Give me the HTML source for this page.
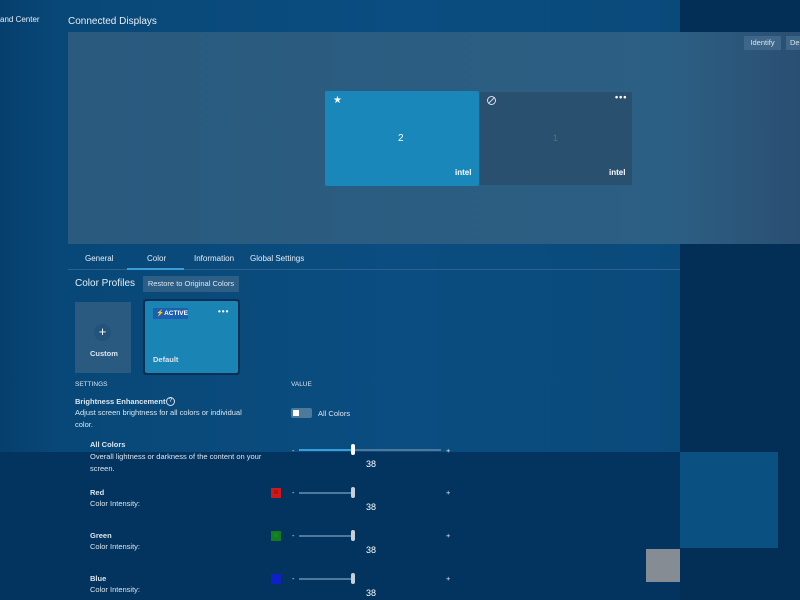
<!DOCTYPE html>
<html><head><style>
*{margin:0;padding:0;box-sizing:border-box}
body{width:800px;height:600px;overflow:hidden;position:relative;font-family:"Liberation Sans",sans-serif;color:#fff;background:#0a4a7c}
.a{position:absolute}
.t{font-size:8px;color:#e6eef5}
.s{font-size:7.5px;color:#dbe6ef}
.b{font-weight:bold}
.track{position:absolute;height:2px;background:#4d7a9c}
.thumb{position:absolute;width:4px;height:11px;background:#c7d0d8;border-radius:2px}
</style></head><body>
<div class="a" style="left:0;top:0;width:800px;height:452px;background:linear-gradient(90deg,#063f6e 0,#084878 60px,#0b4d80 400px,#0a4a7b 680px)"></div>
<div class="a" style="left:0;top:452px;width:800px;height:148px;background:#03345f"></div>
<div class="a" style="left:680px;top:0;width:120px;height:600px;background:#032f57"></div>
<div class="a" style="left:680px;top:452px;width:98px;height:96px;background:#0a5080"></div>
<div class="a" style="left:646px;top:549px;width:34px;height:33px;background:#858c94"></div>
<div class="a t" style="left:0;top:15px;font-size:8px">and Center</div>
<div class="a" style="left:68px;top:16px;font-size:10px;color:#e6eef5">Connected Displays</div>
<div class="a" style="left:68px;top:32px;width:732px;height:212px;background:linear-gradient(90deg,#2a5a7e 0,#2c5f84 600px,#2a4f72 732px)"></div>
<div class="a s" style="left:744px;top:36px;width:37px;height:14px;background:#3e6688;text-align:center;line-height:14px">Identify</div>
<div class="a s" style="left:786px;top:36px;width:20px;height:14px;background:#3e6688;line-height:14px;padding-left:4px">De</div>
<div class="a" style="left:325px;top:91px;width:154px;height:95px;background:#1a87bb;border-radius:2px"></div>
<div class="a" style="left:333px;top:95px;font-size:10px">★</div>
<div class="a" style="left:398px;top:133px;font-size:10px">2</div>
<div class="a b" style="left:455px;top:168px;font-size:8px">intel</div>
<div class="a" style="left:480px;top:92px;width:152px;height:93px;background:#2a5070"></div>
<div class="a" style="left:487px;top:96px;width:9px;height:9px;border:1.3px solid #dde;border-radius:50%"><div class="a" style="left:3px;top:-1px;width:1.3px;height:9px;background:#dde;transform:rotate(45deg)"></div></div>
<div class="a b" style="left:615px;top:92px;font-size:9px;letter-spacing:1px">•••</div>
<div class="a" style="left:553px;top:133px;font-size:9px;color:#4a7a6a">1</div>
<div class="a b" style="left:609px;top:168px;font-size:8px">intel</div>
<div class="a t" style="left:85px;top:254px">General</div>
<div class="a t" style="left:147px;top:254px">Color</div>
<div class="a t" style="left:194px;top:254px">Information</div>
<div class="a t" style="left:250px;top:254px">Global Settings</div>
<div class="a" style="left:68px;top:269px;width:612px;height:1px;background:#2c6090"></div>
<div class="a" style="left:127px;top:268px;width:57px;height:2px;background:#3a9ed8"></div>
<div class="a" style="left:75px;top:278px;font-size:10px;color:#e6eef5">Color Profiles</div>
<div class="a s" style="left:143px;top:276px;width:96px;height:16px;background:#2d5e86;text-align:center;line-height:16px">Restore to Original Colors</div>
<div class="a" style="left:75px;top:302px;width:56px;height:71px;background:#2a5a80"></div>
<div class="a" style="left:94px;top:324px;width:17px;height:17px;border-radius:50%;background:#23527a;text-align:center;font-size:13px;line-height:16px">+</div>
<div class="a b s" style="left:90px;top:349px">Custom</div>
<div class="a" style="left:143px;top:299px;width:97px;height:76px;background:#0b2f52;border-radius:3px"></div>
<div class="a" style="left:145px;top:301px;width:93px;height:72px;background:#1a84b4;border-radius:2px"></div>
<div class="a b" style="left:153px;top:308px;width:35px;height:11px;background:#1c5fb0;font-size:6.5px;line-height:11px;padding-left:3px">⚡ACTIVE</div>
<div class="a b" style="left:218px;top:307px;font-size:8px;letter-spacing:1px">•••</div>
<div class="a b s" style="left:153px;top:355px">Default</div>
<div class="a" style="left:75px;top:381px;font-size:6.5px;color:#dbe6ef">SETTINGS</div>
<div class="a" style="left:291px;top:381px;font-size:6.5px;color:#dbe6ef">VALUE</div>
<div class="a b s" style="left:75px;top:397px">Brightness Enhancement</div>
<div class="a" style="left:166px;top:397px;width:9px;height:9px;border:1px solid #dde;border-radius:50%;font-size:6px;text-align:center;line-height:7px">?</div>
<div class="a s" style="left:75px;top:407px;width:180px;line-height:11.5px">Adjust screen brightness for all colors or individual color.</div>
<div class="a" style="left:291px;top:408px;width:21px;height:10px;background:#4d7a9c;border-radius:2px"><div class="a" style="left:2px;top:2px;width:6px;height:6px;background:#fff"></div></div>
<div class="a s" style="left:318px;top:409px">All Colors</div>
<div class="a b s" style="left:90px;top:440px">All Colors</div>
<div class="a s" style="left:90px;top:451px;width:180px;line-height:11.5px">Overall lightness or darkness of the content on your screen.</div>
<div class="a s" style="left:292px;top:446px">-</div><div class="a s" style="left:446px;top:446px">+</div>
<div class="track" style="left:299px;top:449px;width:142px;background:#4d7a9c"></div>
<div class="track" style="left:299px;top:449px;width:54px;background:#3a9ed8"></div>
<div class="thumb" style="left:351px;top:444px;background:#fff"></div>
<div class="a" style="left:366px;top:459px;font-size:9px">38</div>

<div class="a b s" style="left:90px;top:488px">Red</div><div class="a s" style="left:90px;top:499px">Color Intensity:</div>
<div class="a" style="left:271px;top:488px;width:10px;height:10px;background:#d01818;font-size:5px;text-align:center;line-height:10px;color:#800">R</div>
<div class="a s" style="left:292px;top:488px">-</div><div class="a s" style="left:446px;top:488px">+</div>
<div class="track" style="left:299px;top:492px;width:54px"></div><div class="thumb" style="left:351px;top:487px"></div>
<div class="a" style="left:366px;top:502px;font-size:9px">38</div>

<div class="a b s" style="left:90px;top:531px">Green</div><div class="a s" style="left:90px;top:542px">Color Intensity:</div>
<div class="a" style="left:271px;top:531px;width:10px;height:10px;background:#157a1e;font-size:5px;text-align:center;line-height:10px;color:#0a4">G</div>
<div class="a s" style="left:292px;top:531px">-</div><div class="a s" style="left:446px;top:531px">+</div>
<div class="track" style="left:299px;top:535px;width:54px"></div><div class="thumb" style="left:351px;top:530px"></div>
<div class="a" style="left:366px;top:545px;font-size:9px">38</div>

<div class="a b s" style="left:90px;top:574px">Blue</div><div class="a s" style="left:90px;top:585px">Color Intensity:</div>
<div class="a" style="left:271px;top:574px;width:10px;height:10px;background:#1020c8"></div>
<div class="a s" style="left:292px;top:574px">-</div><div class="a s" style="left:446px;top:574px">+</div>
<div class="track" style="left:299px;top:578px;width:54px"></div><div class="thumb" style="left:351px;top:573px"></div>
<div class="a" style="left:366px;top:588px;font-size:9px">38</div>
</body></html>
